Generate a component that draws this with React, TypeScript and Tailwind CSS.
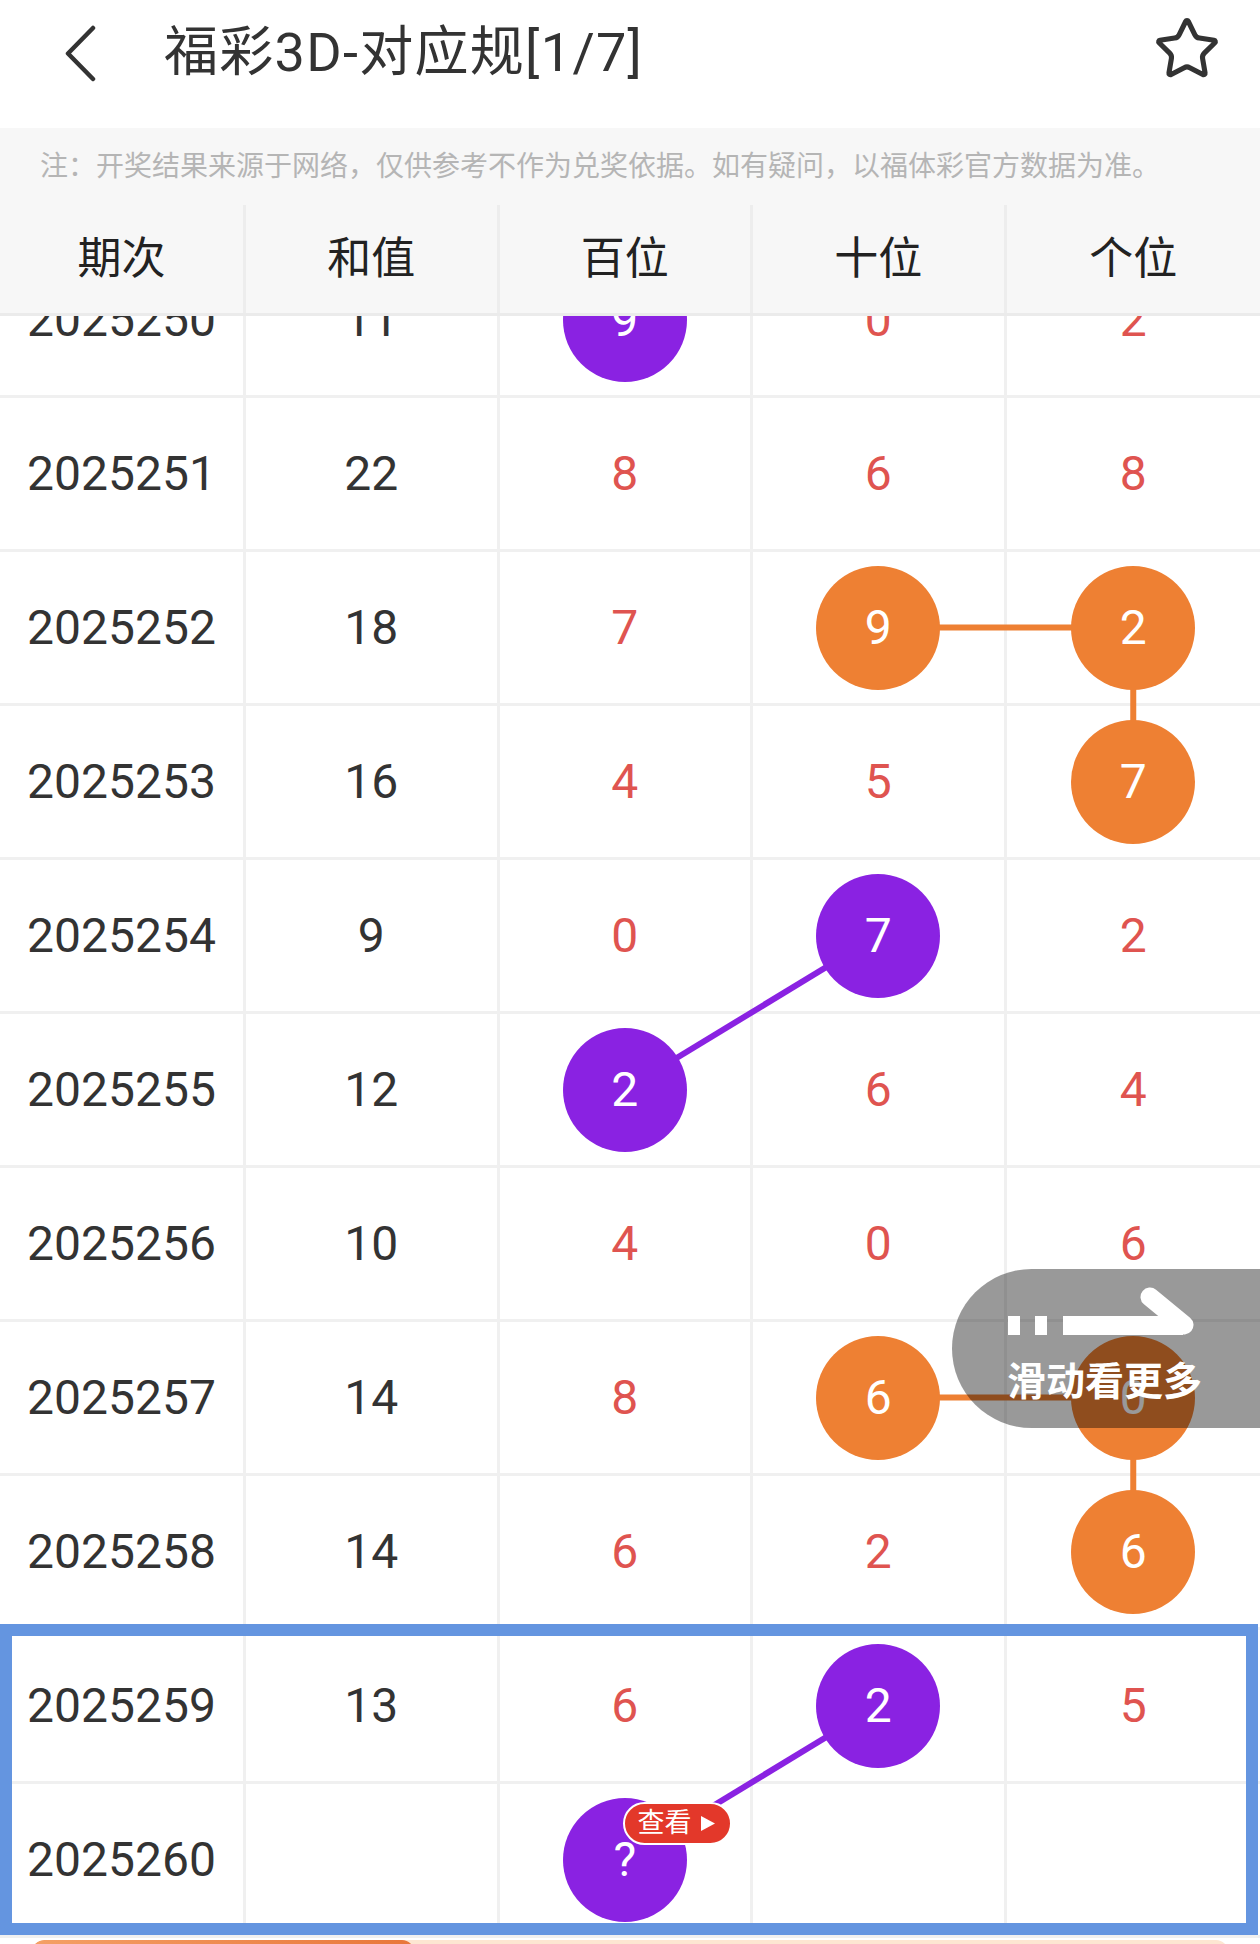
import { Star } from "lucide-react";

type Mark = "p" | "o" | null;

interface Row {
  no: string;
  sum: string;
  digits: string[];
  marks: Mark[];
}

const ROWS: Row[] = [
  { no: "2025250", sum: "11", digits: ["9", "0", "2"], marks: ["p", null, null] },
  { no: "2025251", sum: "22", digits: ["8", "6", "8"], marks: [null, null, null] },
  { no: "2025252", sum: "18", digits: ["7", "9", "2"], marks: [null, "o", "o"] },
  { no: "2025253", sum: "16", digits: ["4", "5", "7"], marks: [null, null, "o"] },
  { no: "2025254", sum: "9", digits: ["0", "7", "2"], marks: [null, "p", null] },
  { no: "2025255", sum: "12", digits: ["2", "6", "4"], marks: ["p", null, null] },
  { no: "2025256", sum: "10", digits: ["4", "0", "6"], marks: [null, null, null] },
  { no: "2025257", sum: "14", digits: ["8", "6", "0"], marks: [null, "o", "o"] },
  { no: "2025258", sum: "14", digits: ["6", "2", "6"], marks: [null, null, "o"] },
  { no: "2025259", sum: "13", digits: ["6", "2", "5"], marks: [null, "p", null] },
  { no: "2025260", sum: "", digits: ["?", "", ""], marks: ["p", null, null] },
];

const ROW_H = 154;
const PURPLE = "#8a22e2";
const ORANGE = "#ee8033";

// first column is 246px, the other four share the rest (253.5px each)
const cx = (col: number) => {
  const left = 246 + 253.5 * (col - 1);
  return col === 4 ? left + 126.75 : left + 125.25;
};
const cy = (row: number) => ROW_H * row + 75.5;

const LINES = [
  { a: [3, 2], b: [4, 2], c: ORANGE },
  { a: [4, 2], b: [4, 3], c: ORANGE },
  { a: [3, 4], b: [2, 5], c: PURPLE },
  { a: [3, 7], b: [4, 7], c: ORANGE },
  { a: [4, 7], b: [4, 8], c: ORANGE },
  { a: [3, 9], b: [2, 10], c: PURPLE },
];

const FONT = { fontFamily: 'Roboto, "Noto Sans CJK SC", sans-serif' };

const Ball = ({ value, mark }: { value: string; mark: "p" | "o" }) => (
  <span
    className={
      "relative z-20 flex h-[124px] w-[124px] items-center justify-center rounded-full text-white " +
      (mark === "p" ? "bg-[#8a22e2]" : "bg-[#ee8033]")
    }
  >
    {value}
  </span>
);

const DataRow = ({ row, index }: { row: Row; index: number }) => (
  <div className="grid h-[154px] grid-cols-[246px_1fr_1fr_1fr_1fr] border-b-[3px] border-[#f0f0f0] text-[48px] leading-none">
    <div className="flex items-center justify-center border-r-[3px] border-[#f0f0f0] text-[#333]">{row.no}</div>
    <div className="flex items-center justify-center border-r-[3px] border-[#f0f0f0] text-[#333]">{row.sum}</div>
    {row.digits.map((d, i) => (
      <div
        key={i}
        className={
          "relative flex items-center justify-center text-[#df5450] " +
          (i < 2 ? "border-r-[3px] border-[#f0f0f0]" : "")
        }
      >
        {row.marks[i] ? <Ball value={d} mark={row.marks[i] as "p" | "o"} /> : d}
        {index === 10 && i === 0 && (
          <span className="absolute left-[123px] top-[18px] z-30 flex h-[43px] items-center rounded-full border-2 border-white bg-[#e3382a] pl-[13px] pr-[14px] text-[27px] leading-none text-white">
            查看
            <svg width="16" height="17" viewBox="0 0 16 17" className="ml-[8px]">
              <path d="M1 1 L15 8.5 L1 16 Z" fill="white" />
            </svg>
          </span>
        )}
      </div>
    ))}
  </div>
);

export default function App() {
  return (
    <div className="w-[1260px] bg-white" style={FONT}>
      {/* top bar */}
      <div className="flex h-[128px] items-center bg-white pb-[22px] pl-[64px] pr-[39px]">
        <svg width="32" height="57" viewBox="0 0 32 57">
          <polyline
            points="29,3 4,28.5 29,54"
            fill="none"
            stroke="#333"
            strokeWidth="4.5"
            strokeLinecap="round"
            strokeLinejoin="round"
          />
        </svg>
        <h1 className="ml-[68px] text-[54px] leading-none tracking-[1.3px] text-[#333]">福彩3D-对应规[1/7]</h1>
        <Star className="ml-auto -mt-[8px]" size={68} strokeWidth={1.8} color="#333" />
      </div>

      <div className="flex h-[77px] items-center bg-[#f7f7f7] pl-[40px] text-[28px] leading-none text-[#b5b5b5]">
        注：开奖结果来源于网络，仅供参考不作为兑奖依据。如有疑问，以福体彩官方数据为准。
      </div>

      {/* column header */}
      <div className="grid h-[111px] grid-cols-[246px_1fr_1fr_1fr_1fr] border-b-[3px] border-[#ebebeb] bg-[#f7f7f7] text-[44px] leading-none text-[#222]">
        {["期次", "和值", "百位", "十位", "个位"].map((h, i) => (
          <div
            key={h}
            className={"flex items-center justify-center " + (i < 4 ? "border-r-[3px] border-[#ededed]" : "")}
          >
            {h}
          </div>
        ))}
      </div>

      {/* rows, scrolled so the first one sits under the header */}
      <div className="overflow-hidden">
        <div className="relative isolate -mt-[72px]">
          <svg width="1260" height={ROW_H * ROWS.length} className="pointer-events-none absolute left-0 top-0 z-10">
            {LINES.map((l, i) => (
              <line
                key={i}
                x1={cx(l.a[0])}
                y1={cy(l.a[1])}
                x2={cx(l.b[0])}
                y2={cy(l.b[1])}
                stroke={l.c}
                strokeWidth="6"
              />
            ))}
          </svg>

          {ROWS.slice(0, 9).map((r, i) => (
            <DataRow key={r.no} row={r} index={i} />
          ))}

          <div className="relative">
            {ROWS.slice(9).map((r, i) => (
              <DataRow key={r.no} row={r} index={i + 9} />
            ))}
            <div className="pointer-events-none absolute -top-[6px] bottom-[3px] left-0 right-[2px] z-30 border-[12px] border-[#6495e0]" />
          </div>

          {/* swipe hint */}
          <div className="absolute right-0 top-[1025px] z-40 flex h-[159px] w-[308px] flex-col items-start rounded-l-[80px] bg-black/40 pl-[52px] pt-[17px]">
            <svg width="190" height="50" viewBox="0 0 190 50">
              <rect x="4" y="30" width="12" height="19" fill="white" />
              <rect x="31" y="30" width="12" height="19" fill="white" />
              <rect x="59" y="30" width="120" height="19" fill="white" />
              <line x1="146" y1="11" x2="180" y2="39" stroke="white" strokeWidth="19" strokeLinecap="round" />
            </svg>
            <span className="ml-[3px] mt-[27px] text-[39px] font-bold leading-none text-white">滑动看更多</span>
          </div>
        </div>
      </div>

      <div className="mx-[32px] mt-[2px] h-[24px] overflow-hidden rounded-full bg-[#fde6d2]">
        <div className="h-full w-[382px] rounded-full bg-gradient-to-r from-[#f4a066] to-[#e8763a]" />
      </div>
    </div>
  );
}
